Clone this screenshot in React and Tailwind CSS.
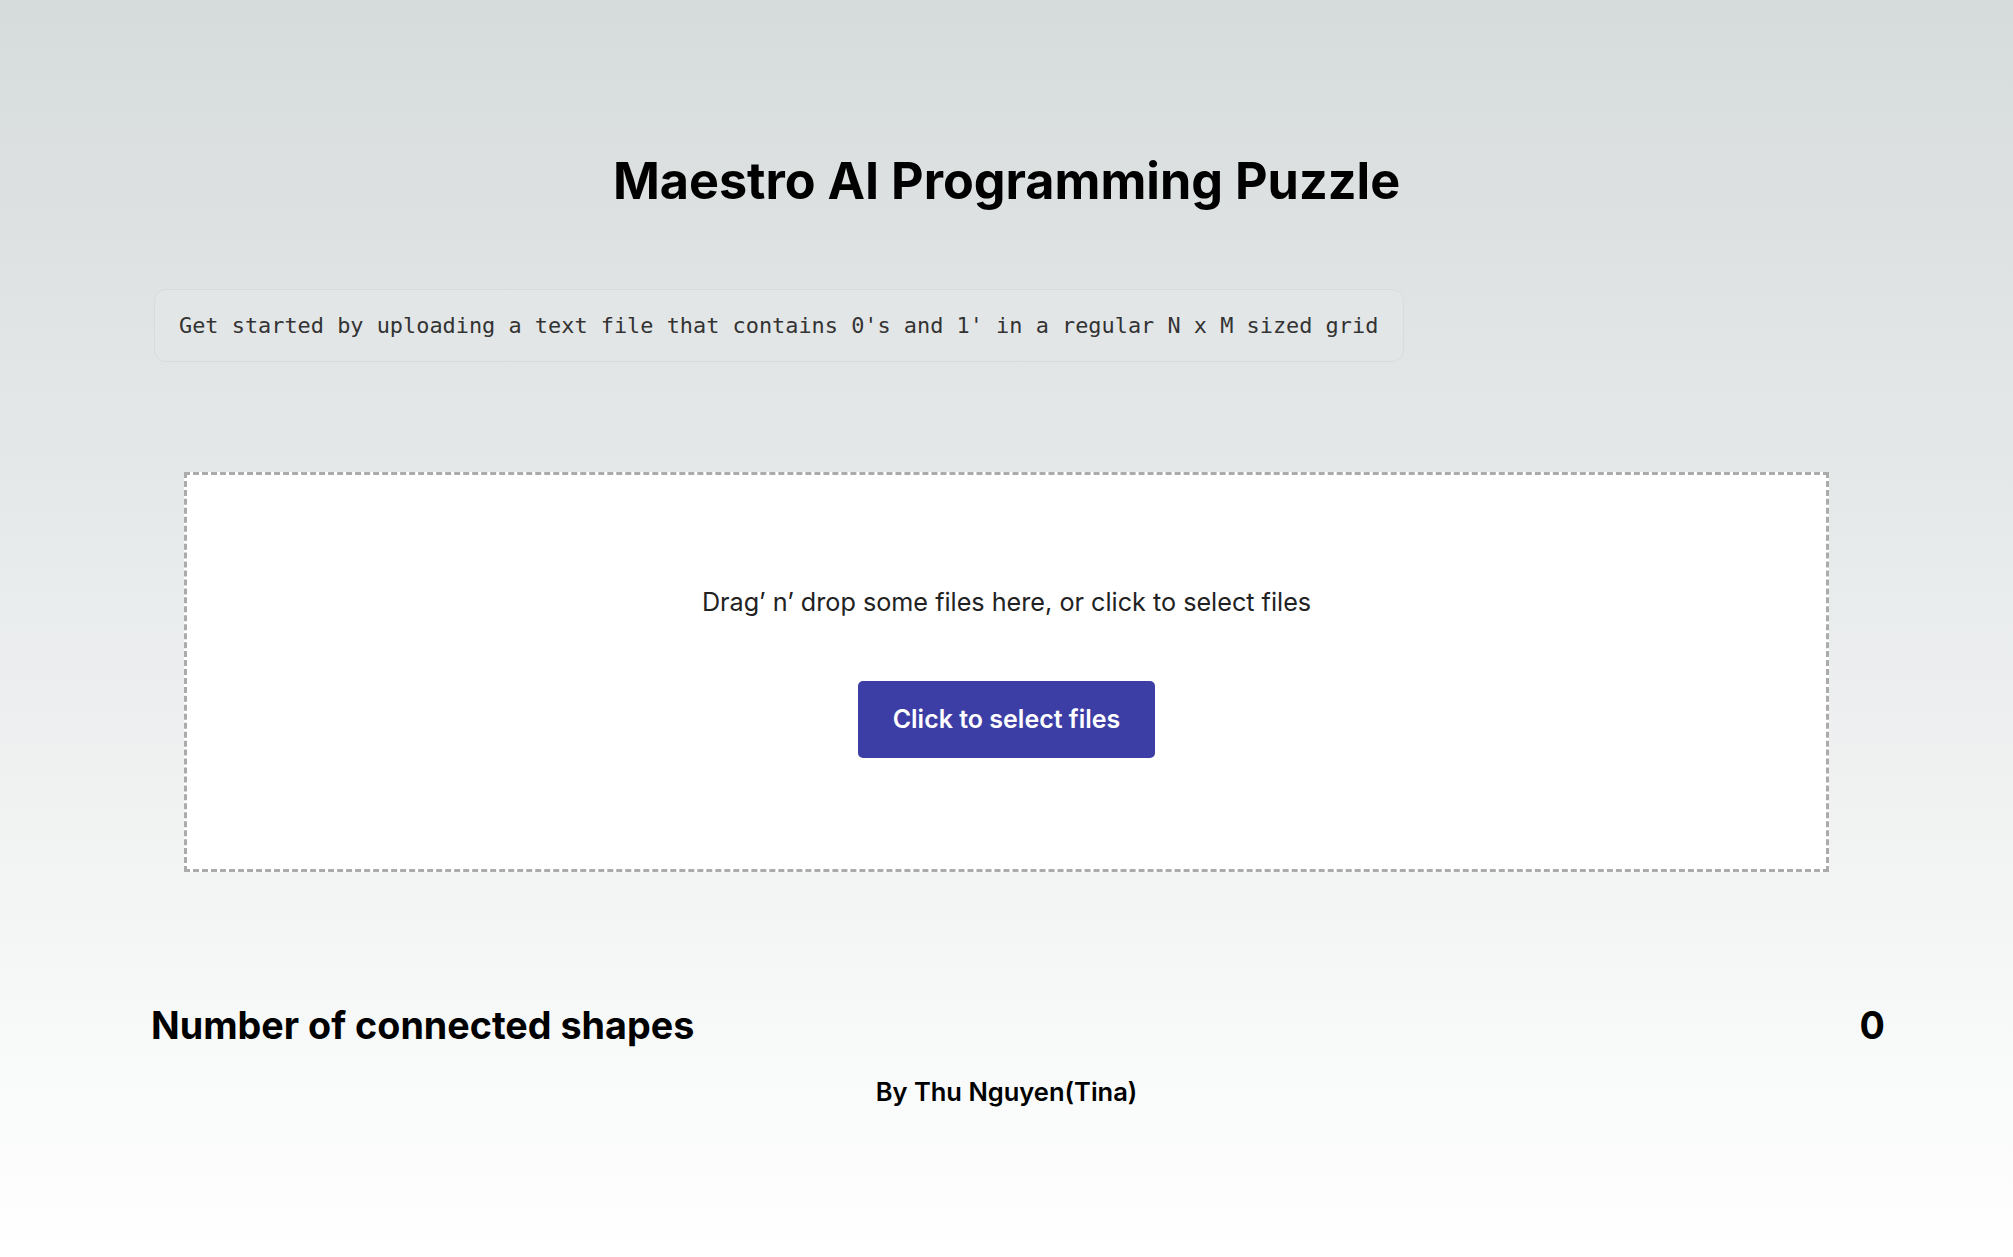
import React from "react";

const App = () => {
  return (
    <div
      className="min-h-screen w-full bg-gradient-to-b from-[#d6dbdc] to-[#ffffff] text-black flex flex-col"
      style={{ fontFamily: "Inter, 'Noto Sans', sans-serif" }}
    >
      {/* heading */}
      <h1 className="pt-[156px] text-center text-[50.3px] font-bold leading-none">
        Maestro AI Programming Puzzle
      </h1>

      {/* hint box */}
      <div className="mt-[83px] ml-[154px] w-[1250px] h-[73px] flex items-center px-6 rounded-xl border border-[#d9dcde] bg-[#e3e6e7]">
        <code
          className="text-[21.9px] leading-none text-[#333] whitespace-nowrap"
          style={{ fontFamily: "'DejaVu Sans Mono', 'Liberation Mono', monospace" }}
        >
          Get started by uploading a text file that contains 0's and 1' in a regular N x M sized grid
        </code>
      </div>

      {/* drop zone */}
      <div className="mt-[110px] mx-auto w-[1645px] h-[400px] border-[3px] border-dashed border-[#ababab] bg-white flex flex-col items-center justify-center gap-[66px] pt-[4px] cursor-pointer">
        <p className="text-[25.2px] leading-none text-[#222]">
          Drag’ n’ drop some files here, or click to select files
        </p>
        <button
          type="button"
          className="w-[297px] h-[77px] rounded-[5px] bg-[#3d3da6] text-white text-[25px] font-semibold"
        >
          Click to select files
        </button>
      </div>

      {/* result */}
      <div className="mt-[135px] pl-[151px] pr-[128px] flex justify-between items-center">
        <h2 className="text-[37.7px] font-bold leading-none">Number of connected shapes</h2>
        <span className="text-[37.7px] font-bold leading-none">0</span>
      </div>

      <p className="mt-[34px] text-center text-[25.5px] font-semibold leading-none">
        By Thu Nguyen(Tina)
      </p>
    </div>
  );
};

export default App;
